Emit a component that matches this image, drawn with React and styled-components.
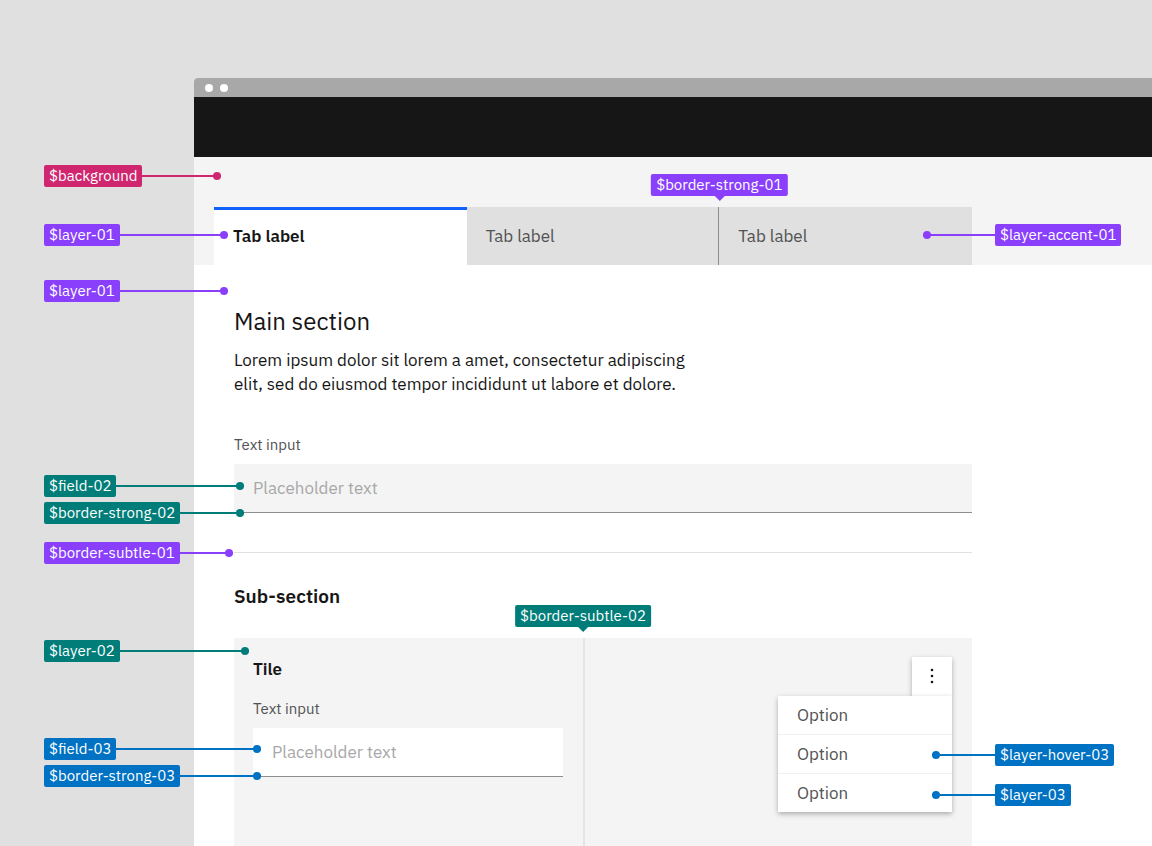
import { useId, useState } from 'react';
import styled, { createGlobalStyle, css } from 'styled-components';

const GlobalStyle = createGlobalStyle`
  * {
    box-sizing: border-box;
  }

  body {
    margin: 0;
    background: #e0e0e0;
    color: #161616;
    font-family: 'IBM Plex Sans', Roboto, 'Open Sans', sans-serif;
    font-size: 17px;
    line-height: 24px;
  }

  button, input {
    font: inherit;
    color: inherit;
  }
`;

const tones = {
  magenta: '#d02670',
  purple: '#8a3ffc',
  teal: '#007d79',
  cyan: '#0072c3',
};

const Page = styled.div`
  min-height: 100vh;
  padding: 78px 0 0 194px;
  display: flex;
  overflow: hidden;
`;

const Window = styled.div`
  flex: 1;
  min-width: 0;
  display: flex;
  flex-direction: column;
  background: #ffffff;
  border-top-left-radius: 4px;
`;

const TitleBar = styled.div`
  height: 19px;
  padding-left: 11px;
  display: flex;
  align-items: center;
  gap: 7px;
  background: #a8a8a8;
  border-top-left-radius: 4px;
`;

const WindowDot = styled.span`
  width: 8px;
  height: 8px;
  border-radius: 50%;
  background: #ffffff;
`;

const Header = styled.header`
  height: 60px;
  background: #161616;
`;

const TabBand = styled.div`
  position: relative;
  padding: 50px 20px 0;
  background: #f4f4f4;
`;

const TabList = styled.div`
  display: grid;
  grid-template-columns: repeat(3, 1fr);
  max-width: 758px;
`;

const TabCell = styled.div`
  position: relative;
`;

const Tab = styled.button`
  display: block;
  width: 100%;
  height: 58px;
  padding: 0 19px;
  border: 0;
  text-align: left;
  background: #e0e0e0;
  color: #525252;
  cursor: pointer;

  ${({ $divided }) => $divided && css`
    border-right: 1px solid #8d8d8d;
  `}

  ${({ $selected }) => $selected && css`
    background: #ffffff;
    color: #161616;
    font-weight: 600;
    box-shadow: inset 0 3px 0 #0f62fe;
  `}
`;

const Main = styled.main`
  flex: 1;
  padding: 40px 40px 0;
  display: flex;
  flex-direction: column;
  position: relative;
`;

const Content = styled.div`
  flex: 1;
  width: 100%;
  max-width: 738px;
  display: flex;
  flex-direction: column;
`;

const Title = styled.h1`
  margin: 0;
  font-size: 24px;
  font-weight: 400;
  line-height: 32px;
`;

const Lead = styled.p`
  max-width: 480px;
  margin: 11px 0 39px;
`;

const FieldGroup = styled.div`
  display: flex;
  flex-direction: column;
  gap: 9px;
`;

const Label = styled.label`
  font-size: 15px;
  line-height: 20px;
  color: #525252;
`;

const InputWrap = styled.div`
  position: relative;
`;

const Input = styled.input`
  display: block;
  width: 100%;
  height: 49px;
  padding: 0 19px;
  border: 0;
  border-bottom: 1px solid #8d8d8d;
  border-radius: 0;
  background: ${({ $bg }) => $bg};

  &::placeholder {
    color: #a8a8a8;
    opacity: 1;
  }
`;

const Divider = styled.div`
  position: relative;
  margin: 39px 0 31px;
  border-top: 1px solid #e0e0e0;
`;

const SectionTitle = styled.h2`
  margin: 0 0 30px;
  font-size: 19px;
  font-weight: 600;
  line-height: 24px;
`;

const Tiles = styled.div`
  flex: 1;
  min-height: 208px;
  display: grid;
  grid-template-columns: 351fr 387fr;
  background: #f4f4f4;
`;

const Tile = styled.section`
  position: relative;
  padding: 19px 20px 19px 19px;

  &:first-child {
    border-right: 2px solid #e4e4e4;
  }
`;

const TileTitle = styled.h3`
  margin: 0 0 18px;
  font-size: 17px;
  font-weight: 600;
  line-height: 24px;
`;

const Overflow = styled.div`
  display: flex;
  flex-direction: column;
  align-items: flex-end;
`;

const MenuButton = styled.button`
  width: 40px;
  height: 39px;
  padding: 0;
  border: 0;
  display: flex;
  align-items: center;
  justify-content: center;
  background: #ffffff;
  box-shadow: 0 2px 5px rgba(0, 0, 0, 0.3);
  cursor: pointer;
`;

const Menu = styled.ul`
  position: relative;
  width: 174px;
  margin: 0;
  padding: 0;
  list-style: none;
  background: #ffffff;
  box-shadow: 0 2px 5px rgba(0, 0, 0, 0.3);
`;

const MenuItem = styled.li`
  position: relative;

  & + & {
    border-top: 1px solid #f0f0f0;
  }
`;

const Option = styled.button`
  display: block;
  width: 100%;
  height: 38px;
  padding: 0 19px;
  border: 0;
  background: none;
  color: #525252;
  text-align: left;
  cursor: pointer;
`;

const Tag = styled.span`
  display: block;
  padding: 0 5px;
  border-radius: 2px;
  background: ${({ $tone }) => tones[$tone]};
  color: #ffffff;
  font-size: 15px;
  line-height: 22px;
  white-space: nowrap;
`;

/* A tag whose leader line ends in a dot over the annotated part. */
const Callout = styled.div`
  position: absolute;
  z-index: 2;
  top: ${({ $top }) => $top}px;
  display: flex;
  align-items: center;
  pointer-events: none;

  ${({ $side, $x, $reach }) => ($side === 'right'
    ? css`
      left: calc(100% - ${$x}px);
      flex-direction: row-reverse;
    `
    : css`
      left: -${$x}px;
      width: ${$reach}px;
    `)}
`;

const Leader = styled.span`
  position: relative;
  flex: ${({ $length }) => ($length ? `0 0 ${$length}px` : '1')};
  height: 2px;
  background: ${({ $tone }) => tones[$tone]};

  &::after {
    content: '';
    position: absolute;
    top: -3px;
    ${({ $side }) => ($side === 'right' ? 'left' : 'right')}: 0;
    width: 8px;
    height: 8px;
    border-radius: 50%;
    background: inherit;
  }
`;

/* A tag that points down at a vertical rule. */
const Pointer = styled.div`
  position: absolute;
  z-index: 2;
  top: -33px;
  left: 100%;
  transform: translateX(-50%);
  pointer-events: none;

  &::after {
    content: '';
    position: absolute;
    top: 100%;
    left: 50%;
    margin-left: -5px;
    border: 5px solid transparent;
    border-bottom: 0;
    border-top-color: ${({ $tone }) => tones[$tone]};
  }
`;

function Note({ token, tone, side = 'left', top, x, reach }) {
  return (
    <Callout $side={side} $top={top} $x={x} $reach={reach}>
      <Tag $tone={tone}>{token}</Tag>
      <Leader $tone={tone} $side={side} $length={side === 'right' ? reach : 0} />
    </Callout>
  );
}

function TextField({ bg, children }) {
  const id = useId();
  return (
    <FieldGroup>
      <Label htmlFor={id}>Text input</Label>
      <InputWrap>
        <Input id={id} type="text" placeholder="Placeholder text" $bg={bg} />
        {children}
      </InputWrap>
    </FieldGroup>
  );
}

function Tabs() {
  const [selected, setSelected] = useState(0);
  return (
    <TabList role="tablist">
      {[0, 1, 2].map((i) => (
        <TabCell key={i} role="presentation">
          <Tab
            type="button"
            role="tab"
            aria-selected={selected === i}
            $selected={selected === i}
            $divided={i === 1}
            onClick={() => setSelected(i)}
          >
            Tab label
          </Tab>
          {i === 0 && <Note token="$layer-01" tone="purple" top={17} x={170} reach={184} />}
          {i === 1 && (
            <Pointer $tone="purple"><Tag $tone="purple">$border-strong-01</Tag></Pointer>
          )}
          {i === 2 && (
            <Note token="$layer-accent-01" tone="purple" side="right" top={17} x={49} reach={72} />
          )}
        </TabCell>
      ))}
    </TabList>
  );
}

const options = [
  { label: 'Option' },
  { label: 'Option', token: '$layer-hover-03', top: 9 },
  { label: 'Option', token: '$layer-03', top: 10 },
];

function OverflowMenu() {
  return (
    <Overflow>
      <MenuButton type="button" aria-label="Options">
        <svg width="20" height="20" viewBox="0 0 20 20" fill="#161616" aria-hidden="true">
          <circle cx="10" cy="3" r="1.3" />
          <circle cx="10" cy="9" r="1.3" />
          <circle cx="10" cy="15" r="1.3" />
        </svg>
      </MenuButton>
      <Menu>
        {options.map(({ label, token, top }, i) => (
          <MenuItem key={i}>
            <Option type="button">{label}</Option>
            {token && <Note token={token} tone="cyan" side="right" top={top} x={20} reach={63} />}
          </MenuItem>
        ))}
      </Menu>
    </Overflow>
  );
}

export default function App() {
  return (
    <>
      <GlobalStyle />
      <Page>
        <Window>
          <TitleBar>
            <WindowDot />
            <WindowDot />
          </TitleBar>
          <Header />
          <TabBand>
            <Note token="$background" tone="magenta" top={8} x={150} reach={177} />
            <Tabs />
          </TabBand>
          <Main>
            <Note token="$layer-01" tone="purple" top={15} x={150} reach={184} />
            <Content>
              <Title>Main section</Title>
              <Lead>
                Lorem ipsum dolor sit lorem a amet, consectetur adipiscing
                elit, sed do eiusmod tempor incididunt ut labore et dolore.
              </Lead>
              <TextField bg="#f4f4f4">
                <Note token="$field-02" tone="teal" top={11} x={190} reach={200} />
                <Note token="$border-strong-02" tone="teal" top={38} x={190} reach={200} />
              </TextField>
              <Divider>
                <Note token="$border-subtle-01" tone="purple" top={-11} x={190} reach={189} />
              </Divider>
              <SectionTitle>Sub-section</SectionTitle>
              <Tiles>
                <Tile>
                  <Note token="$layer-02" tone="teal" top={2} x={190} reach={205} />
                  <Pointer $tone="teal"><Tag $tone="teal">$border-subtle-02</Tag></Pointer>
                  <TileTitle>Tile</TileTitle>
                  <TextField bg="#ffffff">
                    <Note token="$field-03" tone="cyan" top={10} x={209} reach={217} />
                    <Note token="$border-strong-03" tone="cyan" top={37} x={209} reach={217} />
                  </TextField>
                </Tile>
                <Tile>
                  <OverflowMenu />
                </Tile>
              </Tiles>
            </Content>
          </Main>
        </Window>
      </Page>
    </>
  );
}
